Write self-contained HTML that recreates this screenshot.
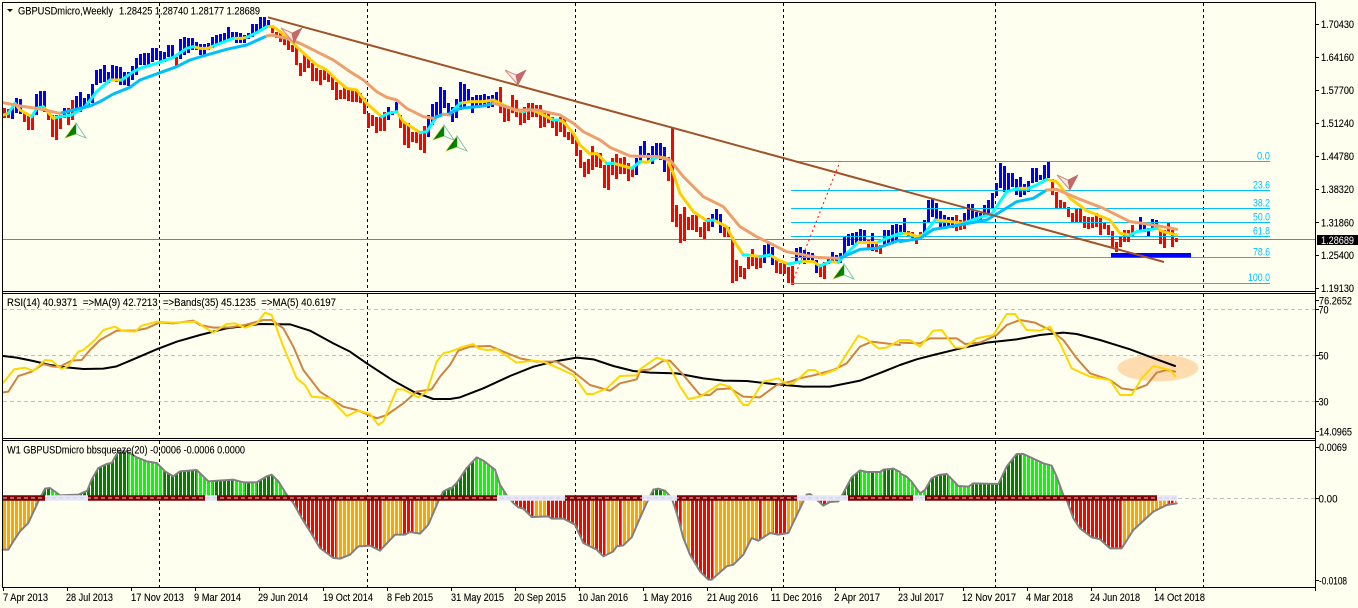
<!DOCTYPE html>
<html><head><meta charset="utf-8"><style>
html,body{margin:0;padding:0;background:#FFFFF0;width:1358px;height:608px;overflow:hidden}
svg{display:block;position:absolute;left:0;top:0}
text{font-family:"Liberation Sans",sans-serif;font-size:11px;fill:#000;white-space:pre;stroke:#000;stroke-width:.12}
.f{fill:#00BFFF;stroke:none}
.l{fill:none;stroke-linejoin:round;stroke-linecap:round}
</style></head><body>
<svg width="1358" height="608" viewBox="0 0 1358 608" xmlns="http://www.w3.org/2000/svg">
<defs>
<pattern id="st" patternUnits="userSpaceOnUse" width="4" height="10"><rect x="2" y="0" width="1" height="10" fill="#FFFFF0"/></pattern>
<clipPath id="c5"><polygon points="8,180 8,335 25,335 40,310 60,280 85,255 115,190 135,152 150,150 180,172 235,170 262,158 275,125 295,90 320,78 335,75 355,40 380,40 410,58 440,70 470,75 495,100 520,115 540,100 590,96 625,130 700,125 730,133 770,133 800,115 815,110 835,130 860,170 880,195 905,240 930,280 960,330 1000,360 1020,362 1050,350 1075,325 1110,323 1140,338 1185,290 1215,290 1230,282 1260,287 1285,260 1315,190 1330,160 1350,150 1350,180"/></clipPath>
<clipPath id="c6"><polygon points="0,180 0,155 20,135 50,90 80,58 100,68 135,95 150,140 170,172 190,195 205,208 220,212 245,237 295,235 305,242 340,242 375,260 400,315 420,325 440,335 460,355 490,340 500,325 520,322 545,298 570,240 590,195 610,155 625,152 645,158 665,180 680,225 700,300 720,350 750,400 775,425 785,425 830,385 850,380 880,350 905,300 925,308 960,285 985,290 1015,285 1060,190 1070,170 1080,168 1095,180 1120,203 1140,192 1165,190 1180,165 1205,118 1230,97 1250,102 1290,102 1300,95 1330,92 1350,102 1350,180"/></clipPath>
<clipPath id="c7"><polygon points="0,625 0,550 20,560 35,575 60,610 75,600 95,565 115,555 140,552 175,588 205,590 220,580 295,582 320,530 350,492 370,492 430,520 455,527 470,560 490,615 500,630 520,685 540,715 575,742 600,748 630,775 665,775 700,720 760,665 800,645 830,640 830,625"/></clipPath>
<g id="buy"><polygon points="11,0 0,15 11,11" fill="#007A00" stroke="#C8B820" stroke-width=".6"/><polygon points="11,0 11,11 21,15" fill="#FFFFF0" stroke="#6DB8A8" stroke-width=".8"/><polygon points="11,2 11,11 6,12" fill="#008800"/></g>
<g id="sell"><polygon points="0,0 11,5 13,15" fill="#FBE8E0" stroke="#D58A80" stroke-width="1"/><polygon points="21,0 11,5 13,15" fill="#C56A68" stroke="#B86060" stroke-width=".6"/></g>
</defs>
<rect width="1358" height="608" fill="#FFFFF0"/>

<!-- vertical grid -->
<path d="M159.5 3V291M367.5 3V291M575.5 3V291M783.5 3V291M995.5 3V291M1203.5 3V291M159.5 294V438M367.5 294V438M575.5 294V438M783.5 294V438M995.5 294V438M1203.5 294V438M159.5 441V587M367.5 441V587M575.5 441V587M783.5 441V587M995.5 441V587M1203.5 441V587" stroke="#000" stroke-width="1" stroke-dasharray="3 3" fill="none"/>

<!-- price line -->
<path d="M3 239.5H1316" stroke="#808080" stroke-width="1"/>

<!-- blue bars -->
<path fill="none" stroke="#0000FF" stroke-width="3" d="M12.5 107V119M16.5 98V113M20.5 99V114M36.5 94V115M40.5 91V108M44.5 91V112M64.5 108V118M76.5 96V113M80.5 92V112M84.5 98V108M88.5 94V107M92.5 84V103M96.5 70V85M100.5 69V83M104.5 65V82M108.5 72V83M112.5 65V80M116.5 66V82M120.5 67V85M124.5 72V85M128.5 72V86M132.5 66V80M136.5 58V75M140.5 54V65M144.5 53V65M148.5 53V65M152.5 48V62M156.5 48V60M160.5 51V63M164.5 52V62M168.5 45V57M172.5 45V57M180.5 39V59M184.5 37V55M188.5 38V53M192.5 38V50M196.5 42V50M200.5 44V55M204.5 44V55M208.5 43V50M212.5 37V48M216.5 35V45M220.5 34V43M224.5 33V42M228.5 27V40M232.5 32V38M236.5 32V43M240.5 33V43M244.5 35V43M248.5 33V39M252.5 24V37M256.5 24V33M260.5 17V31M264.5 17V27M268.5 20V28M388.5 107V120M392.5 111V115M396.5 102V112M428.5 115V137M432.5 104V125M436.5 102V118M440.5 87V115M444.5 90V108M448.5 103V113M452.5 107V122M456.5 99V118M460.5 82V110M464.5 84V107M468.5 89V103M472.5 97V113M476.5 95V107M480.5 95V107M484.5 94V107M488.5 96V108M492.5 95V107M496.5 92V102M636.5 158V175M640.5 146V163M644.5 141V157M648.5 153V162M652.5 146V164M656.5 143V157M660.5 143V160M664.5 147V172M712.5 214V227M716.5 209V222M720.5 214V233M764.5 245V263M768.5 243V257M772.5 247V265M796.5 248V262M800.5 247V257M804.5 250V264M808.5 252V260M812.5 253V263M816.5 260V273M828.5 257V264M832.5 252V262M836.5 255V263M840.5 253V263M844.5 237V257M848.5 234V246M852.5 233V245M856.5 232V243M860.5 229V242M864.5 230V243M872.5 233V251M884.5 230V245M888.5 230V243M892.5 225V242M896.5 224V240M900.5 225V235M904.5 218V233M924.5 220V237M928.5 200V223M932.5 199V217M936.5 203V220M940.5 211V227M944.5 215V228M948.5 217V228M952.5 217V228M964.5 213V226M968.5 204V222M972.5 204V220M976.5 212V220M980.5 213V220M984.5 205V217M988.5 200V215M992.5 193V208M996.5 183V196M1000.5 163V188M1004.5 166V192M1008.5 173V192M1012.5 173V187M1016.5 179V195M1020.5 177V197M1024.5 184V195M1028.5 181V192M1032.5 168V183M1036.5 168V182M1040.5 175V180M1044.5 165V180M1048.5 162V178M1140.5 217V230M1144.5 222V232M1148.5 228V236M1152.5 219V230M1156.5 220V228"/>
<!-- red bars -->
<path fill="none" stroke="#FF0000" stroke-width="3" d="M4.5 108V118M8.5 109V118M24.5 112V122M28.5 115V130M32.5 115V130M48.5 110V120M52.5 115V137M56.5 115V140M60.5 115V129M68.5 108V125M72.5 100V120M176.5 57V66M272.5 27V33M276.5 32V38M280.5 33V42M284.5 37V45M288.5 40V50M292.5 45V52M296.5 47V65M300.5 63V76M304.5 53V72M308.5 57V68M312.5 63V81M316.5 68V81M320.5 70V85M324.5 68V80M328.5 72V82M332.5 77V90M336.5 82V100M340.5 90V99M344.5 87V99M348.5 89V101M352.5 90V102M356.5 90V102M360.5 93V103M364.5 98V114M368.5 113V128M372.5 115V126M376.5 117V133M380.5 117V131M384.5 112V131M400.5 115V128M404.5 122V145M408.5 123V148M412.5 132V142M416.5 132V143M420.5 133V150M424.5 126V153M500.5 87V113M504.5 107V122M508.5 107V121M512.5 95V113M516.5 100V117M520.5 110V125M524.5 107V123M528.5 103V120M532.5 103V117M536.5 105V117M540.5 105V128M544.5 113V127M548.5 113V123M552.5 117V128M556.5 120V136M560.5 117V132M564.5 118V137M568.5 132V140M572.5 133V144M576.5 138V156M580.5 150V168M584.5 162V177M588.5 159V174M592.5 146V170M596.5 152V167M600.5 153V168M604.5 165V188M608.5 165V190M612.5 158V175M616.5 154V179M620.5 158V174M624.5 157V174M628.5 163V181M632.5 167V177M668.5 157V181M672.5 128V222M676.5 205V227M680.5 214V243M684.5 207V241M688.5 217V230M692.5 215V230M696.5 215V232M700.5 227V237M704.5 222V239M708.5 218V231M724.5 227V237M728.5 227V237M732.5 237V283M736.5 260V281M740.5 266V277M744.5 268V279M748.5 257V269M752.5 249V266M756.5 257V269M760.5 257V268M776.5 260V273M780.5 263V274M784.5 263V274M788.5 267V283M792.5 266V285M820.5 267V277M824.5 262V279M868.5 240V248M876.5 242V252M880.5 245V254M908.5 231V237M912.5 232V238M916.5 235V244M920.5 232V238M956.5 215V231M960.5 220V230M964.5 220V229M1052.5 179V195M1056.5 192V208M1060.5 200V208M1064.5 202V208M1068.5 207V217M1072.5 213V222M1076.5 208V222M1080.5 208V222M1084.5 216V228M1088.5 217V229M1092.5 217V228M1096.5 213V227M1100.5 218V235M1104.5 222V229M1108.5 225V235M1112.5 231V247M1116.5 242V252M1120.5 237V247M1124.5 230V242M1128.5 230V242M1132.5 225V237M1160.5 230V244M1164.5 230V248M1168.5 223V233M1172.5 230V247M1176.5 238V242"/>

<!-- fib -->
<path d="M798 161.5H1270M791 190.5H1270M791 208.5H1270M791 222.5H1270M791 236.5H1270M791 257.5H1270M791 283.5H1270" stroke="#00BFFF" stroke-width="1" fill="none"/>
<path d="M792 283L840 161.5" stroke="#FF0000" stroke-width="1" stroke-dasharray="2 3" fill="none"/>

<!-- main MA lines -->
<g transform="scale(.3333333)" stroke-width="9" class="l">
<path class="l" stroke="#FFD000" stroke-width="9" d="M10,345 25,340M45,310 60,330 95,350M130,320 160,355 170,352M330,240 350,240 365,240M580,140 600,145 625,145 640,138M700,115 725,115 740,112M800,80 820,80 860,110 900,150 950,195 980,210 1010,240 1040,265 1070,270 1100,310 1145,350M1190,335 1210,365 1260,398"/>
<path class="l" stroke="#00FFFF" stroke-width="9" d="M25,340 45,310M95,350 110,325 130,320M170,352 215,345 255,320 290,275 330,240M365,240 400,215 420,205 470,190 520,172 560,145 580,140M640,138 660,130 700,115M740,112 770,98 800,80M1145,350 1165,340 1190,335M1260,398 1280,395 1310,350 1330,343 1350,343"/>
<path class="l" stroke="#00BFFF" stroke-width="9" d="M180,340 220,330 270,318 300,305 340,282 390,262 420,240 480,218 530,200 570,180 620,165 680,148 740,135 800,108M1300,355 1330,343"/>
<path class="l" stroke="#EDA06E" stroke-width="9" d="M10,308 60,318 110,325 180,340M800,108 815,105 860,115 900,130 950,155 1000,180 1050,215 1090,240 1130,275 1160,292 1190,300 1220,325 1270,350 1300,355M1330,343 1350,345"/>
</g>
<g transform="translate(450,60) scale(.3333333)">
<path class="l" stroke="#FFD000" stroke-width="9" d="M30,130 60,125 100,125 130,120M130,120 160,135 200,152 220,155 240,148M240,148 260,155 310,180M325,180 340,185 370,220 390,255 420,282 440,280 470,310M490,310 510,315 545,325M570,305 590,307 605,300M625,290 650,295 670,340 690,400 730,455 770,482M790,480 830,500 850,540 880,585M895,585 930,590M960,585 985,600 1015,612M1050,605 1090,605 1110,618M1140,605 1165,607"/>
<path class="l" stroke="#00FFFF" stroke-width="9" d="M0,160 30,130M220,155 240,148M310,180 325,180M470,310 490,310M545,325 570,305M605,300 625,290M770,482 790,480M880,585 895,585M930,590 960,585M1015,612 1050,605M1110,618 1140,605M1165,607 1190,580 1225,547M1280,548 1310,535 1350,520"/>
<path class="l" stroke="#FFD000" stroke-width="9" d="M1225,547 1280,548"/>
<path class="l" stroke="#00BFFF" stroke-width="9" d="M0,160 30,145 100,138 130,130M1165,595 1180,590 1230,568 1280,565 1350,540"/>
<path class="l" stroke="#EDA06E" stroke-width="9" d="M130,130 150,135 200,150 260,150 330,165 370,190 400,215 450,240 480,262 540,288 620,290 660,300 700,350 760,410 820,440 870,500 920,530 1010,575 1100,592 1165,595"/>
</g>
<g transform="translate(900,140) scale(.3333333)">
<path class="l" stroke="#FFD000" stroke-width="9" d="M5,280 30,282 50,290 70,285M105,240 130,242 190,250M355,145 385,145M440,118 470,125 510,175 560,212 630,240 660,280 690,285M770,265 790,275 830,285"/>
<path class="l" stroke="#00FFFF" stroke-width="9" d="M0,280 5,280M70,285 105,240M190,250 240,232 275,222 300,185 320,155 355,145M385,145 410,135 440,118M690,285 710,275 770,265"/>
<path class="l" stroke="#00BFFF" stroke-width="9" d="M0,305 60,295 100,268 140,262 260,240 310,210 350,185 400,175 440,150"/>
<path class="l" stroke="#EDA06E" stroke-width="9" d="M440,150 470,148 540,178 610,205 690,245 760,255 830,268"/>
</g>

<!-- blue rectangle and trendline -->
<rect x="1111" y="253" width="80" height="4.5" fill="#0000FF"/>
<path d="M268 17.3L1164 262" stroke="#A0522D" stroke-width="2" fill="none"/>

<!-- arrows -->
<use href="#buy" x="65" y="123"/><use href="#buy" x="433" y="125"/><use href="#buy" x="446" y="136"/><use href="#buy" x="833" y="264"/>
<use href="#sell" x="281" y="28"/><use href="#sell" x="505" y="70"/><use href="#sell" x="1057" y="175"/>

<!-- RSI pane -->
<ellipse cx="1158" cy="368" rx="40.5" ry="13.5" fill="#FFDCB0"/>
<path d="M3 309.5H1316M3 355.5H1316M3 401.5H1316" stroke="#C0C0C0" stroke-dasharray="4 3" stroke-width="1" fill="none"/>
<g transform="translate(0,290) scale(.3333333)">
<path class="l" stroke="#000" stroke-width="6" d="M10,198 50,203 100,213 150,225 200,232 250,237 310,236 350,229 400,208 470,178 530,155 600,135 680,115 780,102 870,103 930,122 1000,160 1050,185 1100,220 1180,272 1240,305 1300,327 1350,327"/>
<path class="l" stroke="#CD853F" stroke-width="6" d="M10,307 25,305 55,258 95,245 130,222 160,230 180,230 215,212 245,210 270,180 300,150 350,122 405,122 440,115 480,97 520,100 580,92 600,105 640,113 690,112 735,105 790,90 815,90 850,115 880,170 910,240 960,305 1030,350 1070,360 1130,385 1160,375 1210,340 1250,305 1295,298 1320,260 1350,225"/>
<path class="l" stroke="#FFD700" stroke-width="6" d="M10,278 42,238 75,233 100,243 135,210 155,212 185,237 205,228 235,185 250,180 285,150 310,120 345,110 365,122 405,125 425,107 470,95 520,98 590,95 610,110 640,128 680,102 705,100 735,113 770,100 795,68 815,75 850,170 890,265 915,285 935,320 990,325 1040,378 1075,362 1110,372 1135,405 1150,395 1190,298 1210,298 1255,322 1280,305 1310,215 1330,190 1350,185"/>
</g>
<g transform="translate(450,290) scale(.3333333)">
<path class="l" stroke="#000" stroke-width="6" d="M0,327 30,322 100,295 180,258 250,230 310,215 380,203 430,208 490,228 550,243 600,248 680,250 760,265 820,272 890,273 970,282 1060,290 1140,290 1230,272 1300,245 1350,225"/>
<path class="l" stroke="#CD853F" stroke-width="6" d="M0,225 25,182 60,170 120,168 160,185 210,205 260,215 320,215 370,245 420,285 480,302 510,280 560,268 570,242 600,238 640,212 660,212 700,255 750,315 780,315 800,298 840,295 880,320 930,322 980,285 1020,275 1050,265 1095,255 1150,240 1190,220 1230,170 1265,155 1350,165"/>
<path class="l" stroke="#FFD700" stroke-width="6" d="M0,185 40,170 70,162 85,175 110,180 140,178 170,198 200,218 250,212 280,215 320,232 370,255 410,312 430,312 470,295 510,258 560,256 570,238 620,203 650,212 690,290 715,327 750,320 810,282 840,290 880,345 895,345 940,275 985,265 1010,282 1030,280 1075,240 1095,240 1115,255 1160,238 1225,137 1250,147 1285,175 1310,173 1350,150"/>
</g>
<g transform="translate(900,290) scale(.3333333)">
<path class="l" stroke="#000" stroke-width="6" d="M0,225 50,208 100,195 170,178 260,158 350,148 420,135 490,128 530,132 600,150 690,178 770,208 825,228"/>
<path class="l" stroke="#CD853F" stroke-width="6" d="M0,158 60,160 90,145 130,145 170,145 195,162 240,158 290,135 320,105 360,90 405,98 450,120 490,150 530,205 570,250 630,270 665,295 700,300 740,285 770,248 800,240 825,245"/>
<path class="l" stroke="#FFD700" stroke-width="6" d="M0,150 30,150 60,170 100,122 125,120 165,173 195,173 230,145 280,135 320,72 345,72 380,120 420,122 450,110 480,160 515,235 570,260 630,270 660,315 695,315 725,265 760,228 810,240 825,258"/>
</g>

<!-- squeeze histogram fills -->
<path d="M1178 498.5H1316" stroke="#C0C0C0" stroke-dasharray="4 3" fill="none"/>
<g transform="translate(0,438) scale(.3333333)"><g clip-path="url(#c5)">
<rect x="8" y="0" width="110" height="500" fill="#FFA500"/><rect x="118" y="0" width="32" height="500" fill="#008000"/><rect x="150" y="0" width="30" height="500" fill="#00FF00"/><rect x="240" y="0" width="145" height="500" fill="#008000"/><rect x="385" y="0" width="105" height="500" fill="#00FF00"/><rect x="490" y="0" width="100" height="500" fill="#008000"/><rect x="590" y="0" width="50" height="500" fill="#00FF00"/><rect x="640" y="0" width="60" height="500" fill="#008000"/><rect x="700" y="0" width="35" height="500" fill="#00FF00"/><rect x="735" y="0" width="15" height="500" fill="#008000"/><rect x="750" y="0" width="20" height="500" fill="#00FF00"/><rect x="770" y="0" width="50" height="500" fill="#008000"/><rect x="820" y="0" width="50" height="500" fill="#00FF00"/><rect x="870" y="0" width="140" height="500" fill="#FF0000"/><rect x="1010" y="0" width="88" height="500" fill="#FFA500"/><rect x="1098" y="0" width="47" height="500" fill="#FF0000"/><rect x="1145" y="0" width="60" height="500" fill="#FFA500"/><rect x="1205" y="0" width="35" height="500" fill="#FF0000"/><rect x="1240" y="0" width="80" height="500" fill="#FFA500"/><rect x="1320" y="0" width="32" height="500" fill="#008000"/>
</g></g>
<g transform="translate(450,438) scale(.3333333)"><g clip-path="url(#c6)">
<rect x="0" y="0" width="75" height="500" fill="#008000"/><rect x="75" y="0" width="95" height="500" fill="#00FF00"/><rect x="185" y="0" width="65" height="500" fill="#FF0000"/><rect x="250" y="0" width="40" height="500" fill="#FFA500"/><rect x="290" y="0" width="130" height="500" fill="#FF0000"/><rect x="420" y="0" width="10" height="500" fill="#FFA500"/><rect x="430" y="0" width="35" height="500" fill="#FF0000"/><rect x="465" y="0" width="40" height="500" fill="#FFA500"/><rect x="505" y="0" width="10" height="500" fill="#FF0000"/><rect x="515" y="0" width="80" height="500" fill="#FFA500"/><rect x="605" y="0" width="35" height="500" fill="#008000"/><rect x="640" y="0" width="25" height="500" fill="#00FF00"/><rect x="665" y="0" width="30" height="500" fill="#FF0000"/><rect x="695" y="0" width="25" height="500" fill="#FFA500"/><rect x="720" y="0" width="70" height="500" fill="#FF0000"/><rect x="790" y="0" width="135" height="500" fill="#FFA500"/><rect x="925" y="0" width="10" height="500" fill="#FF0000"/><rect x="935" y="0" width="35" height="500" fill="#FFA500"/><rect x="970" y="0" width="40" height="500" fill="#FF0000"/><rect x="1010" y="0" width="50" height="500" fill="#FFA500"/><rect x="1110" y="0" width="18" height="500" fill="#FF0000"/><rect x="1128" y="0" width="42" height="500" fill="#FFA500"/><rect x="1175" y="0" width="55" height="500" fill="#008000"/><rect x="1230" y="0" width="30" height="500" fill="#00FF00"/><rect x="1260" y="0" width="12" height="500" fill="#008000"/><rect x="1272" y="0" width="28" height="500" fill="#00FF00"/><rect x="1300" y="0" width="30" height="500" fill="#008000"/><rect x="1330" y="0" width="20" height="500" fill="#00FF00"/>
</g></g>
<g transform="translate(900,290) scale(.3333333)"><g clip-path="url(#c7)">
<rect x="0" y="300" width="78" height="600" fill="#00FF00"/><rect x="78" y="300" width="67" height="600" fill="#008000"/><rect x="145" y="300" width="70" height="600" fill="#00FF00"/><rect x="215" y="300" width="150" height="600" fill="#008000"/><rect x="365" y="300" width="125" height="600" fill="#00FF00"/><rect x="495" y="300" width="170" height="600" fill="#FF0000"/><rect x="665" y="300" width="140" height="600" fill="#FFA500"/><rect x="805" y="300" width="15" height="600" fill="#FF0000"/><rect x="820" y="300" width="15" height="600" fill="#FFA500"/>
</g></g>
<rect x="3" y="441" width="1175" height="146" fill="url(#st)"/>

<!-- squeeze outline -->
<g transform="translate(0,438) scale(.3333333)"><path class="l" stroke="#808080" stroke-width="6" d="M8,335 25,335 40,310 60,280 85,255 115,190 135,152 150,150 180,172 235,170 262,158 275,125 295,90 320,78 335,75 355,40 380,40 410,58 440,70 470,75 495,100 520,115 540,100 590,96 625,130 700,125 730,133 770,133 800,115 815,110 835,130 860,170 880,195 905,240 930,280 960,330 1000,360 1020,362 1050,350 1075,325 1110,323 1140,338 1185,290 1215,290 1230,282 1260,287 1285,260 1315,190 1330,160 1350,150"/></g>
<g transform="translate(450,438) scale(.3333333)"><path class="l" stroke="#808080" stroke-width="6" d="M0,155 20,135 50,90 80,58 100,68 135,95 150,140 170,172 190,195 205,208 220,212 245,237 295,235 305,242 340,242 375,260 400,315 420,325 440,335 460,355 490,340 500,325 520,322 545,298 570,240 590,195 610,155 625,152 645,158 665,180 680,225 700,300 720,350 750,400 775,425 785,425 830,385 850,380 880,350 905,300 925,308 960,285 985,290 1015,285 1060,190 1070,170 1080,168 1095,180 1120,203 1140,192 1165,190 1180,165 1205,118 1230,97 1250,102 1290,102 1300,95 1330,92 1350,102"/></g>
<g transform="translate(900,290) scale(.3333333)"><path class="l" stroke="#808080" stroke-width="6" d="M0,550 20,560 35,575 60,610 75,600 95,565 115,555 140,552 175,588 205,590 220,580 295,582 320,530 350,492 370,492 430,520 455,527 470,560 490,615 500,630 520,685 540,715 575,742 600,748 630,775 665,775 700,720 760,665 800,645 830,640"/></g>

<!-- zero band -->
<path d="M45 498H88M205 498H217M497 498H565M642 498H677M797 498H848M913 498H925M1157 498H1177" stroke="#E6E6FA" stroke-width="5.5" fill="none"/>
<path d="M3 498H45M88 498H205M217 498H497M565 498H642M677 498H797M848 498H913M925 498H1157" stroke="#800000" stroke-width="5.5" fill="none"/>
<path d="M3 498H1177" stroke="#D8D0D0" stroke-width="1" stroke-dasharray="4 3" fill="none"/>

<!-- frame -->
<path d="M2.5 2V587.5M2 2.5H1316M1315.5 2V591M2 291.5H1316M2 293.5H1316M2 438.5H1316M2 440.5H1316M2 587.5H1316" stroke="#000" stroke-width="1" fill="none"/>
<!-- ticks -->
<path d="M1316 24.5h3M1316 57.5h3M1316 90.5h3M1316 123.5h3M1316 156.5h3M1316 189.5h3M1316 222.5h3M1316 255.5h3M1316 288.5h3M1316 300.5h3M1316 309.5h3M1316 355.5h3M1316 401.5h3M1316 431.5h3M1316 447.5h3M1316 498.5h3M1316 580.5h3M3.5 587v4M67.5 587v4M131.5 587v4M195.5 587v4M259.5 587v4M323.5 587v4M387.5 587v4M451.5 587v4M515.5 587v4M579.5 587v4M643.5 587v4M707.5 587v4M771.5 587v4M835.5 587v4M899.5 587v4M963.5 587v4M1027.5 587v4M1091.5 587v4M1155.5 587v4" stroke="#000" stroke-width="1" fill="none"/>

<!-- header -->
<polygon points="7,9 13,9 10,12" fill="#000"/>
<text x="18" y="14.5" textLength="95" lengthAdjust="spacingAndGlyphs">GBPUSDmicro,Weekly</text>
<text x="119" y="14.5" textLength="141" lengthAdjust="spacingAndGlyphs">1.28425 1.28740 1.28177 1.28689</text>
<text x="7" y="306" textLength="329" lengthAdjust="spacingAndGlyphs">RSI(14) 40.9371  =&gt;MA(9) 42.7213  =&gt;Bands(35) 45.1235  =&gt;MA(5) 40.6197</text>
<text x="7" y="453.5" textLength="238" lengthAdjust="spacingAndGlyphs">W1 GBPUSDmicro bbsqueeze(20) -0.0006 -0.0006 0.0000</text>

<!-- fib labels -->
<text class="f" x="1257" y="159.5" textLength="13" lengthAdjust="spacingAndGlyphs">0.0</text>
<text class="f" x="1253" y="188.5" textLength="17" lengthAdjust="spacingAndGlyphs">23.6</text>
<text class="f" x="1253" y="206.5" textLength="17" lengthAdjust="spacingAndGlyphs">38.2</text>
<text class="f" x="1253" y="220.5" textLength="17" lengthAdjust="spacingAndGlyphs">50.0</text>
<text class="f" x="1253" y="234.5" textLength="17" lengthAdjust="spacingAndGlyphs">61.8</text>
<text class="f" x="1253" y="255.5" textLength="17" lengthAdjust="spacingAndGlyphs">78.6</text>
<text class="f" x="1248" y="281" textLength="22" lengthAdjust="spacingAndGlyphs">100.0</text>

<!-- right axis -->
<text x="1321" y="28" textLength="33" lengthAdjust="spacingAndGlyphs">1.70430</text>
<text x="1321" y="61" textLength="33" lengthAdjust="spacingAndGlyphs">1.64160</text>
<text x="1321" y="94" textLength="33" lengthAdjust="spacingAndGlyphs">1.57700</text>
<text x="1321" y="127" textLength="33" lengthAdjust="spacingAndGlyphs">1.51240</text>
<text x="1321" y="160" textLength="33" lengthAdjust="spacingAndGlyphs">1.44780</text>
<text x="1321" y="193" textLength="33" lengthAdjust="spacingAndGlyphs">1.38320</text>
<text x="1321" y="226.5" textLength="33" lengthAdjust="spacingAndGlyphs">1.31860</text>
<text x="1321" y="259" textLength="33" lengthAdjust="spacingAndGlyphs">1.25400</text>
<text x="1321" y="292" textLength="33" lengthAdjust="spacingAndGlyphs">1.19130</text>
<rect x="1317" y="235" width="41" height="10" fill="#000"/>
<text x="1321" y="244" textLength="33" lengthAdjust="spacingAndGlyphs" style="fill:#fff;stroke:none">1.28689</text>
<text x="1319" y="304.5" textLength="33" lengthAdjust="spacingAndGlyphs">76.2652</text>
<text x="1318.5" y="313.5" textLength="10" lengthAdjust="spacingAndGlyphs">70</text>
<text x="1318.5" y="359.5" textLength="10" lengthAdjust="spacingAndGlyphs">50</text>
<text x="1318.5" y="405.5" textLength="10" lengthAdjust="spacingAndGlyphs">30</text>
<text x="1319" y="435.5" textLength="33" lengthAdjust="spacingAndGlyphs">14.0965</text>
<text x="1319" y="451" textLength="28" lengthAdjust="spacingAndGlyphs">0.0069</text>
<text x="1318.5" y="502.5" textLength="19" lengthAdjust="spacingAndGlyphs">0.00</text>
<text x="1319" y="584.5" textLength="28" lengthAdjust="spacingAndGlyphs">-0.0108</text>

<!-- date axis -->
<text x="3" y="601" textLength="45" lengthAdjust="spacingAndGlyphs">7 Apr 2013</text>
<text x="66" y="601" textLength="47" lengthAdjust="spacingAndGlyphs">28 Jul 2013</text>
<text x="131" y="601" textLength="53" lengthAdjust="spacingAndGlyphs">17 Nov 2013</text>
<text x="194" y="601" textLength="47" lengthAdjust="spacingAndGlyphs">9 Mar 2014</text>
<text x="258" y="601" textLength="50" lengthAdjust="spacingAndGlyphs">29 Jun 2014</text>
<text x="323" y="601" textLength="50" lengthAdjust="spacingAndGlyphs">19 Oct 2014</text>
<text x="387" y="601" textLength="46" lengthAdjust="spacingAndGlyphs">8 Feb 2015</text>
<text x="451" y="601" textLength="53" lengthAdjust="spacingAndGlyphs">31 May 2015</text>
<text x="514" y="601" textLength="52" lengthAdjust="spacingAndGlyphs">20 Sep 2015</text>
<text x="578" y="601" textLength="50" lengthAdjust="spacingAndGlyphs">10 Jan 2016</text>
<text x="643" y="601" textLength="49" lengthAdjust="spacingAndGlyphs">1 May 2016</text>
<text x="707" y="601" textLength="51" lengthAdjust="spacingAndGlyphs">21 Aug 2016</text>
<text x="771" y="601" textLength="51" lengthAdjust="spacingAndGlyphs">11 Dec 2016</text>
<text x="834" y="601" textLength="46" lengthAdjust="spacingAndGlyphs">2 Apr 2017</text>
<text x="898" y="601" textLength="46" lengthAdjust="spacingAndGlyphs">23 Jul 2017</text>
<text x="962" y="601" textLength="54" lengthAdjust="spacingAndGlyphs">12 Nov 2017</text>
<text x="1026" y="601" textLength="47" lengthAdjust="spacingAndGlyphs">4 Mar 2018</text>
<text x="1090" y="601" textLength="50" lengthAdjust="spacingAndGlyphs">24 Jun 2018</text>
<text x="1154" y="601" textLength="51" lengthAdjust="spacingAndGlyphs">14 Oct 2018</text>
</svg>
</body></html>
